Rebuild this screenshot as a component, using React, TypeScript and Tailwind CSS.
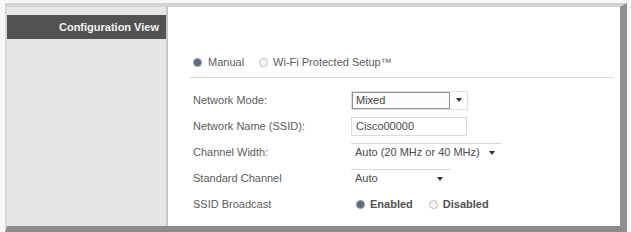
import React from 'react';

const font = { fontFamily: '"Liberation Sans", Arial, sans-serif' };

function Radio({ on }: { on?: boolean }) {
  return on ? (
    <span className="inline-block w-[9px] h-[9px] rounded-full bg-[#5a6c7e] border border-[#8d9cab]" />
  ) : (
    <span className="inline-block w-[9px] h-[9px] rounded-full bg-[#f5f5f5] border border-[#bdbdbd]" />
  );
}

function Arrow() {
  return <span className="inline-block w-0 h-0 border-l-[3px] border-r-[3px] border-t-[4px] border-l-transparent border-r-transparent border-t-[#333]" />;
}

const rows = [
  'Network Mode:',
  'Network Name (SSID):',
  'Channel Width:',
  'Standard Channel',
  'SSID Broadcast',
];

export default function App() {
  return (
    <div style={font} className="w-[631px] h-[232px] bg-[#f7f7f7] pt-[3px] pl-[5px] overflow-hidden">
      <div className="w-[622px] h-[229px] flex bg-white border-t-[4px] border-l-[2px] border-t-[#d3d3d3] border-l-[#d8d8d8] border-r-[7px] border-r-[#909090] border-b-[6px] border-b-[#8c8c8c]">
        {/* left column */}
        <div className="w-[161px] bg-[#e6e6e6] border-r-2 border-r-[#c6c6c6] pt-[8px]">
          <div className="h-[24px] bg-[#525252] text-[#f4f4f4] text-[11px] font-bold flex items-center justify-end pr-[7px]">
            Configuration View
          </div>
        </div>

        {/* content */}
        <div className="flex-1 bg-white pl-[22px] pr-[7px] pt-[46px] text-[11px] text-[#5c5c5c]">
          <div className="h-[18px] flex items-center pl-[3px]">
            <Radio on />
            <span className="ml-[6px]">Manual</span>
            <span className="ml-[15px] flex"><Radio /></span>
            <span className="ml-[5px]">Wi-Fi Protected Setup™</span>
          </div>
          <div className="mt-[6px] h-px bg-[#d6d6d6]" />

          <div className="mt-[9px] pl-[3px]">
            {rows.map((label, i) => (
              <div key={label} className="h-[26px] flex items-center">
                <span className="w-[158px]">{label}</span>
                {i === 0 && (
                  <div className="w-[117px] h-[19px] flex items-center border border-[#dddddd]">
                    <div className="w-[98px] h-[17px] border border-[#909090] bg-[#fbfbfb] pl-[3px] flex items-center text-[#444]">Mixed</div>
                    <div className="flex-1 flex justify-center"><Arrow /></div>
                  </div>
                )}
                {i === 1 && (
                  <div className="w-[116px] h-[19px] border border-[#dadada] pl-[4px] flex items-center text-[#4c4c4c]">Cisco00000</div>
                )}
                {i === 2 && (
                  <div className="w-[150px] h-[18px] border-t border-[#d6d6d6] pl-[4px] flex items-center text-[#4c4c4c]">
                    <span>Auto (20 MHz or 40 MHz)</span>
                    <span className="ml-auto mr-[6px] flex"><Arrow /></span>
                  </div>
                )}
                {i === 3 && (
                  <div className="w-[99px] h-[18px] border-t border-[#d6d6d6] pl-[4px] flex items-center text-[#4c4c4c]">
                    <span>Auto</span>
                    <span className="ml-auto mr-[7px] flex"><Arrow /></span>
                  </div>
                )}
                {i === 4 && (
                  <div className="flex items-center pl-[5px] font-bold text-[#505050]">
                    <Radio on />
                    <span className="ml-[5px]">Enabled</span>
                    <span className="ml-[16px] flex"><Radio /></span>
                    <span className="ml-[5px]">Disabled</span>
                  </div>
                )}
              </div>
            ))}
          </div>
        </div>
      </div>
    </div>
  );
}
